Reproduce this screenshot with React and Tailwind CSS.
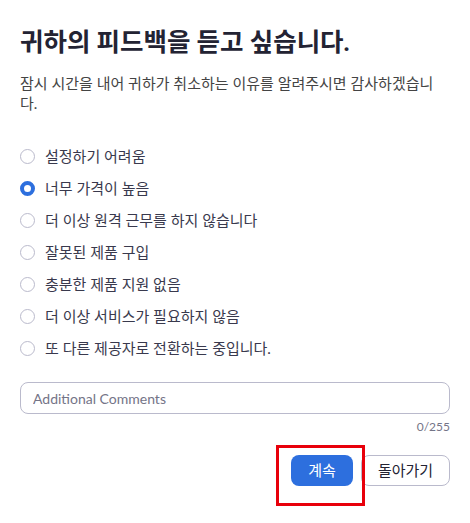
import { useState } from 'react';

const REASONS = [
  '설정하기 어려움',
  '너무 가격이 높음',
  '더 이상 원격 근무를 하지 않습니다',
  '잘못된 제품 구입',
  '충분한 제품 지원 없음',
  '더 이상 서비스가 필요하지 않음',
  '또 다른 제공자로 전환하는 중입니다.',
];

const FONT = { fontFamily: 'Lato, "Noto Sans CJK KR", sans-serif' };

export default function App() {
  const [selected, setSelected] = useState(1);
  const [comment, setComment] = useState('');

  return (
    <div className="w-[470px] h-[523px] bg-white px-5 pt-[25px]" style={FONT}>
      <h1 className="text-[25.5px] font-bold leading-[32px] text-[#232333]">
        귀하의 피드백을 듣고 싶습니다.
      </h1>
      <p className="mt-[16px] text-[15px] leading-[20px] text-[#444444]">
        잠시 시간을 내어 귀하가 취소하는 이유를 알려주시면 감사하겠습니다.
      </p>

      <div className="mt-[32px] flex flex-col gap-[10px]">
        {REASONS.map((r, i) => (
          <label key={i} className="flex items-center gap-[10px] h-[22px] cursor-pointer">
            <span
              className={`w-[15px] h-[15px] rounded-full flex-shrink-0 ${
                selected === i ? 'border-[4px] border-[#2D6FDE]' : 'border border-[#BABACC]'
              }`}
              onClick={() => setSelected(i)}
            />
            <span className="text-[15px] text-[#39394D]" onClick={() => setSelected(i)}>
              {r}
            </span>
          </label>
        ))}
      </div>

      <input
        value={comment}
        onChange={e => setComment(e.target.value)}
        placeholder="Additional Comments"
        maxLength={255}
        className="mt-[23px] w-full h-[32px] rounded-[8px] border border-[#BABACC] px-3 text-[14px] text-[#232333] placeholder:text-[#747487] outline-none"
      />
      <div className="text-right text-[12px] leading-[16px] text-[#747487] mt-[5px]">
        {comment.length}/255
      </div>

      <div className="relative flex justify-end gap-[8px] mt-[20px]">
        <div className="relative">
          <button className="w-[62px] h-[31px] rounded-[8px] bg-[#2D6FDE] text-white text-[15px]">
            계속
          </button>
          <div className="absolute left-[-15px] top-[-10px] w-[89px] h-[61px] border-[3px] border-[#E8000B] pointer-events-none" />
        </div>
        <button className="w-[89px] h-[31px] rounded-[8px] bg-white border border-[#BABACC] text-[#232333] text-[15px]">
          돌아가기
        </button>
      </div>
    </div>
  );
}
